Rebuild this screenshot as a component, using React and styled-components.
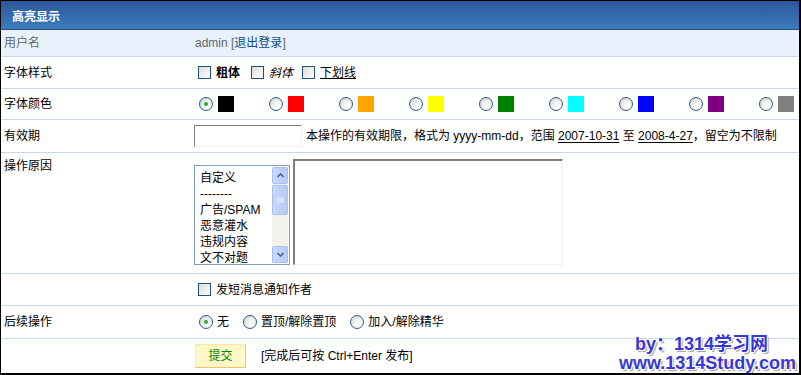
import React from "react";
import styled, { createGlobalStyle } from "styled-components";

const GlobalStyle = createGlobalStyle`
  body {
    margin: 0;
    background: #fff;
  }
`;

const Frame = styled.div`
  position: relative;
  width: 801px;
  height: 375px;
  box-sizing: border-box;
  border: 1px solid #000;
  border-right-width: 2px;
  border-bottom-width: 2px;
  overflow: hidden;
  font-family: Tahoma, "Liberation Sans", "Noto Sans CJK SC", sans-serif;
  font-size: 12px;
  color: #000;
`;

const Header = styled.div`
  height: 28px;
  display: flex;
  align-items: center;
  padding-left: 11px;
  border-bottom: 1px solid #27487a;
  background: linear-gradient(#2c579a, #3b7dbe);
  color: #fff;
  font-weight: bold;
  font-size: 12px;
`;

const Row = styled.div`
  display: grid;
  grid-template-columns: 193px 1fr;
  align-items: ${(p) => (p.$top ? "start" : "center")};
  height: ${(p) => p.$h}px;
  box-sizing: border-box;
  border-bottom: ${(p) => (p.$last ? "none" : "1px solid #c8d8ea")};
  background: ${(p) => (p.$alt ? "#e8f2fc" : "#fff")};
`;

const Label = styled.div`
  padding-left: 3px;
  padding-top: ${(p) => (p.$top ? "5px" : "0")};
  line-height: 16px;
  color: ${(p) => (p.$muted ? "#666" : "#000")};
`;

const Value = styled.div`
  display: flex;
  align-items: center;
  line-height: 16px;
`;

const Muted = styled.span`
  color: #666;
  padding-left: 1px;
`;

const Link = styled.span`
  color: #0e4e8c;
`;

const Box = styled.span`
  display: inline-block;
  width: 13px;
  height: 13px;
  box-sizing: border-box;
  border: 1px solid #1c5180;
  background: linear-gradient(135deg, #dcdcd7, #fff);
  margin: 0 5px 0 4px;
  flex-shrink: 0;
`;

const Radio = styled.span`
  position: relative;
  display: inline-block;
  width: 14px;
  height: 14px;
  box-sizing: border-box;
  border-radius: 50%;
  border: 1px solid #2a5b8c;
  background: radial-gradient(circle at 65% 70%, #fff 10%, #d6d6d0 90%);
  margin: 0 4px 0 ${(p) => (p.$first ? 5 : 0)}px;
  flex-shrink: 0;

  &::after {
    content: "";
    display: ${(p) => (p.$checked ? "block" : "none")};
    position: absolute;
    left: 4px;
    top: 4px;
    width: 4px;
    height: 4px;
    border-radius: 50%;
    background: #2bab2b;
  }
`;

const Option = styled.span`
  display: inline-flex;
  align-items: center;
  margin-right: ${(p) => p.$gap || 0}px;
  font-weight: ${(p) => (p.$bold ? "bold" : "normal")};
  font-style: ${(p) => (p.$italic ? "italic" : "normal")};
  text-decoration: ${(p) => (p.$under ? "underline" : "none")};
`;

const ColorItem = styled.span`
  display: inline-flex;
  align-items: center;
  width: 70px;
`;

const Swatch = styled.span`
  display: inline-block;
  width: 16px;
  height: 16px;
  margin-left: 1px;
  background: ${(p) => p.$c};
`;

const DateInput = styled.div`
  width: 108px;
  height: 22px;
  box-sizing: border-box;
  border: 1px solid #f0f0f0;
  border-top-color: #808080;
  border-left-color: #808080;
  margin-right: 4px;
`;

const Abbr = styled.span`
  text-decoration: underline;
  text-underline-offset: 2px;
`;

const ReasonBox = styled.div`
  display: flex;
  align-items: flex-end;
  padding-top: 6px;
`;

const ListBox = styled.div`
  display: flex;
  width: 96px;
  height: 100px;
  box-sizing: border-box;
  border: 1px solid #7f9db9;
  margin-right: 3px;
  background: #fff;
`;

const ListItems = styled.div`
  flex: 1;
  padding: 4px 0 0 5px;
  line-height: 16px;
  white-space: nowrap;
  overflow: hidden;
`;

const ScrollBar = styled.div`
  display: flex;
  flex-direction: column;
  width: 16px;
  margin: 1px 1px 1px 0;
  background: #f2f1ec;
`;

const ScrollBtn = styled.div`
  display: flex;
  align-items: center;
  justify-content: center;
  height: ${(p) => p.$h}px;
  box-sizing: border-box;
  border: 1px solid #a9bff2;
  border-radius: 2px;
  background: linear-gradient(90deg, #c9d8fc, #b6cbf7);
  margin-bottom: ${(p) => p.$mb || 0}px;
`;

const Track = styled.div`
  flex: 1;
`;

const TextArea = styled.div`
  width: 270px;
  height: 106px;
  box-sizing: border-box;
  border: 1px solid #f0f0f0;
  border-top: 2px solid #808080;
  border-left: 2px solid #808080;
`;

const Actions = styled.div`
  display: flex;
  align-items: center;
  line-height: 16px;
`;

const Submit = styled.div`
  display: flex;
  align-items: center;
  justify-content: center;
  width: 51px;
  height: 24px;
  box-sizing: border-box;
  margin-left: 1px;
  margin-right: 15px;
  background: #fff8c6;
  border: 1px solid #fbe9a6;
  border-right-color: #efc466;
  border-bottom-color: #efc466;
  color: #0a8a0a;
`;

const Watermark = styled.div`
  position: absolute;
  right: 3px;
  bottom: 0px;
  display: flex;
  flex-direction: column;
  align-items: flex-end;
  font-family: "Liberation Sans", "Noto Sans CJK SC", sans-serif;
  font-weight: bold;
  font-size: 18px;
  line-height: 19px;
  color: #3838d8;
  text-shadow: 1px 1px 0 #fff, -1px -1px 0 #fff, 1px -1px 0 #fff,
    -1px 1px 0 #fff, 2px 2px 1px #9a9a9a;
`;

const WatermarkTop = styled.span`
  margin-right: 28px;
`;

const Arrow = ({ up }) => (
  <svg width="7" height="5" viewBox="0 0 7 5">
    <path
      d={up ? "M0.5 4 L3.5 1 L6.5 4" : "M0.5 1 L3.5 4 L6.5 1"}
      fill="none"
      stroke="#4d6185"
      strokeWidth="1.6"
    />
  </svg>
);

const Grip = () => (
  <svg width="7" height="7" viewBox="0 0 7 7">
    <path d="M0 1h7M0 3h7M0 5h7" stroke="#eef3fe" strokeWidth="1" />
  </svg>
);

export default function App() {
  const colors = [
    "#000000",
    "#ff0000",
    "#ffa500",
    "#ffff00",
    "#008000",
    "#00ffff",
    "#0000ff",
    "#800080",
    "#808080",
  ];
  const reasons = ["自定义", "--------", "广告/SPAM", "恶意灌水", "违规内容", "文不对题"];

  return (
    <>
      <GlobalStyle />
      <Frame>
        <Header>高亮显示</Header>

        <Row $h={27} $alt>
          <Label $muted>用户名</Label>
          <Value>
            <Muted>
              admin [<Link>退出登录</Link>]
            </Muted>
          </Value>
        </Row>

        <Row $h={32}>
          <Label>字体样式</Label>
          <Value>
            <Box />
            <Option $bold $gap={7}>粗体</Option>
            <Box />
            <Option $italic $gap={5}>斜体</Option>
            <Box />
            <Option $under>下划线</Option>
          </Value>
        </Row>

        <Row $h={31}>
          <Label>字体颜色</Label>
          <Value>
            {colors.map((c, i) => (
              <ColorItem key={c}>
                <Radio $first $checked={i === 0} />
                <Swatch $c={c} />
              </ColorItem>
            ))}
          </Value>
        </Row>

        <Row $h={33}>
          <Label>有效期</Label>
          <Value>
            <DateInput />
            <span>
              本操作的有效期限，格式为 yyyy-mm-dd，范围 <Abbr>2007-10-31</Abbr> 至{" "}
              <Abbr>2008-4-27</Abbr>，留空为不限制
            </span>
          </Value>
        </Row>

        <Row $h={121} $top>
          <Label $top>操作原因</Label>
          <ReasonBox>
            <ListBox>
              <ListItems>
                {reasons.map((r) => (
                  <div key={r}>{r}</div>
                ))}
              </ListItems>
              <ScrollBar>
                <ScrollBtn $h={17} $mb={1}>
                  <Arrow up />
                </ScrollBtn>
                <ScrollBtn $h={30}>
                  <Grip />
                </ScrollBtn>
                <Track />
                <ScrollBtn $h={17}>
                  <Arrow />
                </ScrollBtn>
              </ScrollBar>
            </ListBox>
            <TextArea />
          </ReasonBox>
        </Row>

        <Row $h={32}>
          <Label />
          <Value>
            <Box />
            <Option>发短消息通知作者</Option>
          </Value>
        </Row>

        <Row $h={33}>
          <Label>后续操作</Label>
          <Value>
            <Radio $first $checked />
            <Option $gap={14}>无</Option>
            <Radio />
            <Option $gap={14}>置顶/解除置顶</Option>
            <Radio />
            <Option>加入/解除精华</Option>
          </Value>
        </Row>

        <Row $h={34} $last>
          <Label />
          <Actions>
            <Submit>提交</Submit>
            <span>[完成后可按 Ctrl+Enter 发布]</span>
          </Actions>
        </Row>

        <Watermark>
          <WatermarkTop>by：1314学习网</WatermarkTop>
          <span>www.1314Study.com</span>
        </Watermark>
      </Frame>
    </>
  );
}
